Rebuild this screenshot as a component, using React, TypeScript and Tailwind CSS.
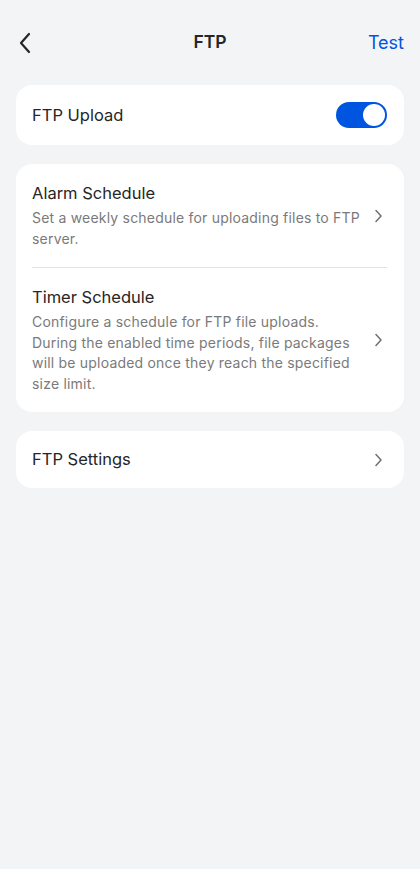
import { useState } from "react";

function Chevron() {
  return (
    <svg width="9" height="14" viewBox="0 0 9 14" fill="none" className="shrink-0">
      <path d="M2 1.5 7 7l-5 5.5" stroke="#6f6f6f" strokeWidth="1.5" strokeLinecap="round" strokeLinejoin="round" />
    </svg>
  );
}

function ScheduleRow({ title, description }: { title: string; description: string }) {
  return (
    <button className="flex w-full items-center gap-[10px] py-[18px] text-left">
      <div className="min-w-0 flex-1">
        <p className="text-[16.5px] leading-[22px] text-[#262626]">{title}</p>
        <p className="mt-1 text-[14px] leading-[20.5px] tracking-[0.2px] text-[#7a7a7a]">{description}</p>
      </div>
      <Chevron />
    </button>
  );
}

export default function App() {
  const [enabled, setEnabled] = useState(true);

  return (
    <div className="min-h-[869px] bg-[#f3f4f6] px-4 font-['Inter',sans-serif]">
      <header className="relative flex h-[85px] items-center justify-between">
        <button className="-ml-0.5 p-1" aria-label="Back">
          <svg width="14" height="22" viewBox="0 0 14 22" fill="none">
            <path d="M11 2 3 11l8 9" stroke="#262626" strokeWidth="2.2" strokeLinecap="round" strokeLinejoin="round" />
          </svg>
        </button>
        <h1 className="absolute left-1/2 -translate-x-1/2 text-[17.5px] font-semibold text-[#262626]">FTP</h1>
        <button className="text-[18px] text-[#0055e0]">Test</button>
      </header>

      <div className="grid gap-[19px]">
        <section className="flex h-[60px] items-center justify-between rounded-2xl bg-white pl-4 pr-[17px]">
          <span className="text-[16.5px] text-[#262626]">FTP Upload</span>
          <button
            onClick={() => setEnabled(!enabled)}
            className={`flex h-[26px] w-[51px] items-center rounded-full p-[2px] ${enabled ? "justify-end bg-[#0055e0]" : "justify-start bg-[#d1d5db]"}`}
          >
            <span className="block h-[22px] w-[22px] rounded-full bg-white" />
          </button>
        </section>

        <section className="rounded-2xl bg-white pl-4 pr-[21px]">
          <ScheduleRow
            title="Alarm Schedule"
            description="Set a weekly schedule for uploading files to FTP server."
          />
          <div className="mr-[-4px] h-px bg-[#e3e3e3]" />
          <ScheduleRow
            title="Timer Schedule"
            description="Configure a schedule for FTP file uploads. During the enabled time periods, file packages will be uploaded once they reach the specified size limit."
          />
        </section>

        <button className="flex h-[57px] w-full items-center justify-between rounded-2xl bg-white pl-4 pr-[21px] text-left">
          <span className="text-[16.5px] text-[#262626]">FTP Settings</span>
          <Chevron />
        </button>
      </div>
    </div>
  );
}
